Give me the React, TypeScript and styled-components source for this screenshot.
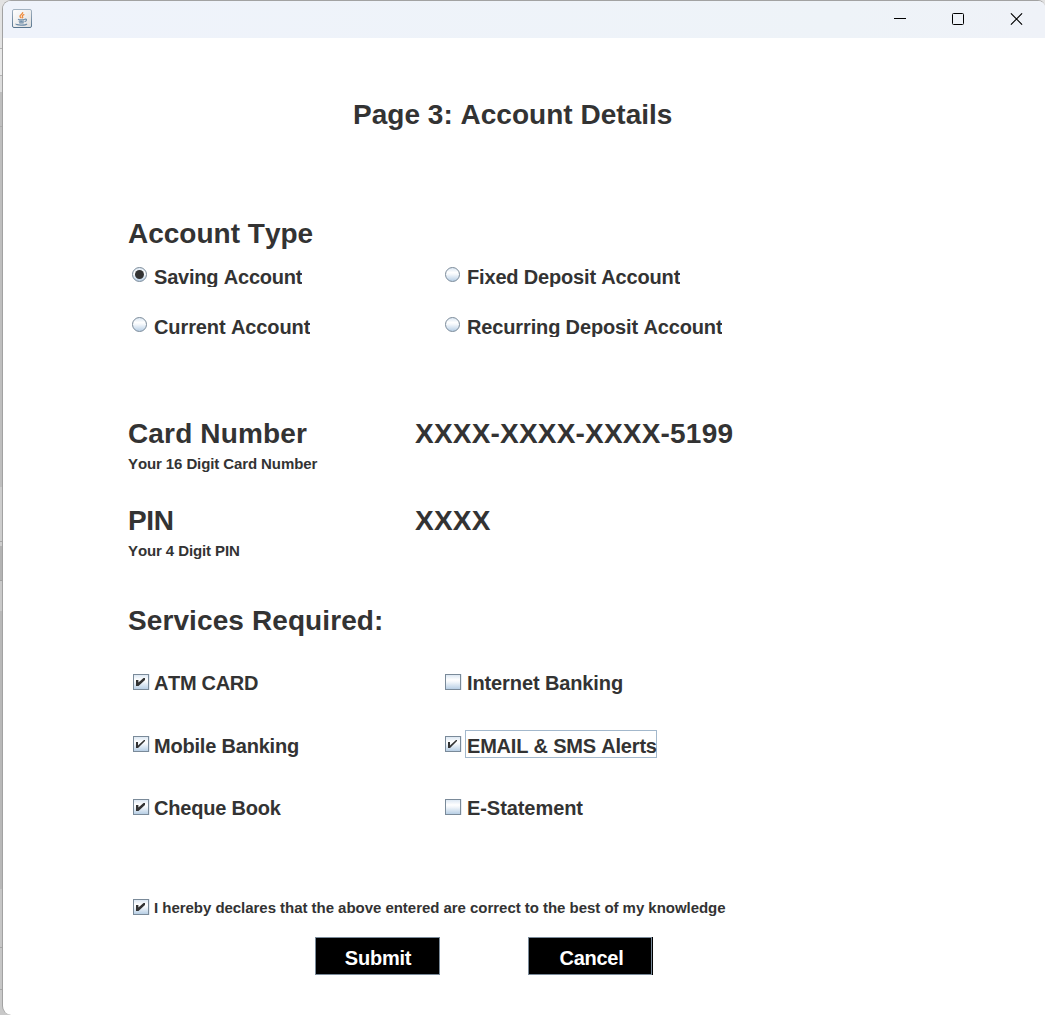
import React from "react";
import styled, { createGlobalStyle } from "styled-components";

const GlobalStyle = createGlobalStyle`
  * { box-sizing: border-box; }
  body {
    margin: 0;
    overflow: hidden;
    background: #d9d9d9;
    font-family: "Liberation Sans", Arial, sans-serif;
    font-kerning: none;
    font-weight: bold;
    color: #333;
  }
`;

const Desktop = styled.div`
  height: 1015px;
  width: 1045px;
  padding-left: 2px;
  background: linear-gradient(
    #e2e2e2 0 48px, #b4b4b4 48px 49px, #e8e8e8 49px 75px, #b4b4b4 75px 76px,
    #dcdcdc 76px 92px, #bebebe 92px 126px, #adadad 126px 127px, #bebebe 127px 487px,
    #cdcdcd 487px 541px, #a6a6a6 541px 542px, #cdcdcd 542px 546px, #b3b3b3 546px 580px,
    #a0a0a0 580px 581px, #c9c9c9 581px 611px, #b8b8b8 611px 889px, #c6c6c6 889px 947px,
    #a6a6a6 947px 948px, #c6c6c6 948px 989px, #a6a6a6 989px 990px, #c9c9c9 990px
  );
`;

const Window = styled.main`
  height: 1015px;
  border: solid #a2a2a2;
  border-width: 1px 0 0 1px;
  border-radius: 9px 7px 0 9px;
  background: #fff;
  overflow: hidden;
`;

const TitleBar = styled.header`
  display: flex;
  align-items: flex-start;
  justify-content: space-between;
  height: 37px;
  padding: 8px 22px 0 9px;
  background: linear-gradient(90deg, #eff3fb, #eef3f8 80%, #eff2f8);
`;

const WindowControls = styled.div`
  display: flex;
  gap: 46px;
  padding-top: 4px;
`;

const Content = styled.form`
  display: flex;
  flex-direction: column;
  padding-left: 125px;
`;

const Heading = styled.h2<{ $track?: number }>`
  margin: 0;
  font-size: 28px;
  line-height: 32px;
  letter-spacing: ${(p) => p.$track ?? 0.1}px;
  white-space: nowrap;
`;

const PageTitle = styled(Heading)`
  margin: 61px 0 87px 225px;
`;

const Hint = styled.p`
  margin: 0;
  padding-top: 5px;
  font-size: 15px;
  line-height: 17px;
  letter-spacing: -0.1px;
`;

const RadioGrid = styled.div`
  display: grid;
  grid-template-columns: 313px 400px;
  grid-auto-rows: 50px;
  margin: 17px 0 51px 4px;
`;

const Detail = styled.section<{ $height: number }>`
  display: grid;
  grid-template-columns: 287px 1fr;
  height: ${(p) => p.$height}px;
  align-content: start;
`;

const ServicesGrid = styled.div`
  display: grid;
  grid-template-columns: 312px 400px;
  grid-template-rows: 62px 63px 63px;
  margin: 37px 0 37px 5px;
`;

const Option = styled.label`
  display: flex;
  align-items: flex-start;
  height: 30px;
`;

const RadioText = styled.span<{ $track: number }>`
  height: 21px;
  margin: -1px 0 0 7px;
  overflow: hidden;
  font-size: 20px;
  line-height: 23px;
  letter-spacing: ${(p) => p.$track}px;
  white-space: nowrap;
`;

const ServiceText = styled.span<{ $track: number; $focused?: boolean; $inset: number; $drop: number }>`
  height: 28px;
  margin: -6px 0 0 ${(p) => p.$inset}px;
  padding: ${(p) => 3 + p.$drop}px 0 0 1px;
  border: 1px solid ${(p) => (p.$focused ? "#a3b8cc" : "transparent")};
  width: ${(p) => (p.$focused ? "192px" : "auto")};
  font-size: 20px;
  line-height: 23px;
  letter-spacing: ${(p) => p.$track}px;
  white-space: nowrap;
`;

const Radio = styled.span<{ $on?: boolean }>`
  flex: none;
  display: grid;
  place-items: center;
  width: 15px;
  height: 15px;
  border: 1px solid #7a8a99;
  border-radius: 50%;
  background: linear-gradient(#dde8f3, #fff 35%, #f3f7fb 50%, #b8cfe5);
  &::after {
    content: "";
    width: 9px;
    height: 9px;
    border-radius: 50%;
    background: ${(p) => (p.$on ? "#333" : "transparent")};
  }
`;

const Box = styled.span`
  flex: none;
  width: 16px;
  height: 16px;
  border: 1px solid #7a8a99;
  box-shadow: 1px 0 #e6edf4;
  background: linear-gradient(#dde8f3, #fff 35%, #f3f7fb 50%, #b8cfe5);
  svg { display: block; }
`;

const Declaration = styled.label`
  display: flex;
  align-items: flex-start;
  height: 38px;
  margin-left: 5px;
`;

const DeclarationText = styled.span`
  margin-left: 5px;
  font-size: 15px;
  line-height: 17px;
  letter-spacing: -0.035px;
  white-space: nowrap;
`;

const Actions = styled.div`
  display: flex;
  gap: 88px;
  padding-left: 187px;
`;

const Button = styled.button<{ $edge?: boolean }>`
  width: 125px;
  height: 38px;
  padding: 5px 0 0 1px;
  border: 1px solid #7a8a99;
  ${(p) => p.$edge && "width: 124px; box-shadow: 1px 0 #000; padding-left: 3px;"}
  background: #000;
  color: #fff;
  font: bold 20px "Liberation Sans", Arial, sans-serif;
  font-kerning: none;
  letter-spacing: -0.25px;
`;

function JavaIcon() {
  return (
    <svg width="20" height="20" viewBox="0 0 20 20" fill="none">
      <defs>
        <linearGradient id="tile" x1="0" y1="0" x2="1" y2="1">
          <stop offset="0" stopColor="#fff" />
          <stop offset="1" stopColor="#dedede" />
        </linearGradient>
        <linearGradient id="rim" x1="0" y1="0" x2="0" y2="1">
          <stop offset="0" stopColor="#a3b3c2" />
          <stop offset="1" stopColor="#58758f" />
        </linearGradient>
      </defs>
      <rect x=".5" y=".5" width="19" height="18" rx="1.5" fill="url(#tile)" stroke="url(#rim)" />
      <path d="M10.7 3.2c.5 2-3.3 2.5-2.7 4.300.2.8 1 1 1.400 1.700M12.300 5.300c-1.500.7-2.600 1.500-1.700 2.500.5.600.1 1-.3 1.400" stroke="#ef8b3c" strokeWidth="1.300" />
      <path d="M6 10.200c1.500.7 5 .6 7 0M6.700 12c1.700.6 3.700.5 5.500 0M7.200 13.600c1.500.5 3 .4 4.500 0M13 10.200c2-.4 2 1.800-.3 2.500M4 14.700c-.6 1.700 9.500 1.900 11 .3" stroke="#6d8ca8" strokeWidth="1.200" />
    </svg>
  );
}

type Weight = "thick" | "thin";
const CHECKS: Record<Weight, string> = {
  thick: "M2 5h2.400v2.600L9.500 3H11v2L4.500 11H2z",
  thin: "M2 5h2v3.400L10 3h1v1L4 11H2z",
};

function Checkbox({ check }: { check?: Weight }) {
  return (
    <Box>
      {check && (
        <svg width="14" height="14" viewBox="0 0 14 14">
          <path d={CHECKS[check]} fill="#333" />
        </svg>
      )}
    </Box>
  );
}

const ACCOUNTS = [
  { name: "Saving Account", track: -0.2, on: true },
  { name: "Fixed Deposit Account", track: -0.17 },
  { name: "Current Account", track: -0.1 },
  { name: "Recurring Deposit Account", track: -0.14 },
];

const SERVICES: { name: string; track: number; check?: Weight; focused?: boolean }[] = [
  { name: "ATM CARD", track: -0.33, check: "thick" },
  { name: "Internet Banking", track: -0.11 },
  { name: "Mobile Banking", track: -0.2, check: "thin" },
  { name: "EMAIL & SMS Alerts", track: -0.2, check: "thin", focused: true },
  { name: "Cheque Book", track: -0.2, check: "thick" },
  { name: "E-Statement", track: -0.07 },
];

export default function App() {
  return (
    <Desktop>
      <GlobalStyle />
      <Window>
        <TitleBar>
          <JavaIcon />
          <WindowControls>
            <svg width="12" height="12"><path d="M0 5.500h12" stroke="#000" /></svg>
            <svg width="12" height="12"><rect x=".5" y=".5" width="11" height="11" rx="1" fill="none" stroke="#000" /></svg>
            <svg width="13" height="12"><path d="M.9.400l11.200 11.200M12.100.400l-11.200 11.200" stroke="#000" strokeWidth="1.200" /></svg>
          </WindowControls>
        </TitleBar>
        <Content>
          <PageTitle as="h1" $track={0.02}>Page 3: Account Details</PageTitle>
          <Heading $track={0}>Account Type</Heading>
          <RadioGrid>
            {ACCOUNTS.map((a) => (
              <Option key={a.name}>
                <Radio $on={a.on} />
                <RadioText $track={a.track}>{a.name}</RadioText>
              </Option>
            ))}
          </RadioGrid>
          <Detail $height={87}>
            <Heading $track={0.15}>Card Number</Heading>
            <Heading $track={0.2}>XXXX-XXXX-XXXX-5199</Heading>
            <Hint>Your 16 Digit Card Number</Hint>
          </Detail>
          <Detail $height={100}>
            <Heading $track={-0.4}>PIN</Heading>
            <Heading $track={0.2}>XXXX</Heading>
            <Hint>Your 4 Digit PIN</Hint>
          </Detail>
          <Heading>Services Required:</Heading>
          <ServicesGrid>
            {SERVICES.map((s, i) => (
              <Option key={s.name}>
                <Checkbox check={s.check} />
                <ServiceText
                  $track={s.track}
                  $focused={s.focused}
                  $inset={i % 2 ? 4 : 3}
                  $drop={i === 2 || i === 3 ? 1 : 0}
                >
                  {s.name}
                </ServiceText>
              </Option>
            ))}
          </ServicesGrid>
          <Declaration>
            <Checkbox check="thick" />
            <DeclarationText>I hereby declares that the above entered are correct to the best of my knowledge</DeclarationText>
          </Declaration>
          <Actions>
            <Button type="button">Submit</Button>
            <Button type="button" $edge>Cancel</Button>
          </Actions>
        </Content>
      </Window>
    </Desktop>
  );
}
